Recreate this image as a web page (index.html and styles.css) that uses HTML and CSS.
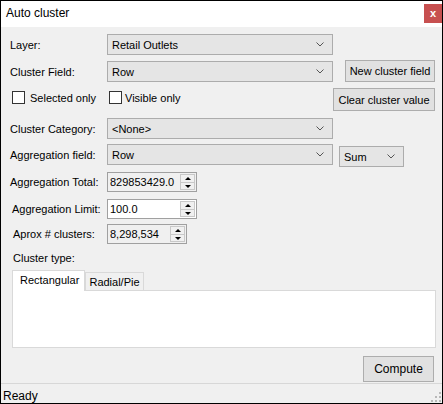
FILE: index.html
```html
<!DOCTYPE html>
<html>
<head>
<meta charset="utf-8">
<link rel="stylesheet" href="styles.css">
</head>
<body>
<div class="window">
  <div class="titlebar">
    <span class="title">Auto cluster</span>
    <div class="close">x</div>
  </div>
  <div class="content">
    <div class="row r1">
      <span class="lbl">Layer:</span>
      <div class="combo wide"><span>Retail Outlets</span><svg class="chev" width="8" height="5" viewBox="0 0 8 5"><polyline points="0.5,0.5 4,4 7.5,0.5" fill="none" stroke="#555" stroke-width="1"/></svg></div>
    </div>
    <div class="row r2">
      <span class="lbl">Cluster Field:</span>
      <div class="combo wide c2"><span>Row</span><svg class="chev" width="8" height="5" viewBox="0 0 8 5"><polyline points="0.5,0.5 4,4 7.5,0.5" fill="none" stroke="#555" stroke-width="1"/></svg></div>
      <div class="btn btn-new">New cluster field</div>
    </div>
    <div class="row r3">
      <div class="check c-sel"><span class="box"></span><span>Selected only</span></div>
      <div class="check c-vis"><span class="box"></span><span>Visible only</span></div>
      <div class="btn btn-clear">Clear cluster value</div>
    </div>
    <div class="row r4">
      <span class="lbl">Cluster Category:</span>
      <div class="combo wide"><span>&lt;None&gt;</span><svg class="chev" width="8" height="5" viewBox="0 0 8 5"><polyline points="0.5,0.5 4,4 7.5,0.5" fill="none" stroke="#555" stroke-width="1"/></svg></div>
    </div>
    <div class="row r5">
      <span class="lbl">Aggregation field:</span>
      <div class="combo wide"><span>Row</span><svg class="chev" width="8" height="5" viewBox="0 0 8 5"><polyline points="0.5,0.5 4,4 7.5,0.5" fill="none" stroke="#555" stroke-width="1"/></svg></div>
      <div class="combo sum"><span>Sum</span><svg class="chev" width="8" height="5" viewBox="0 0 8 5"><polyline points="0.5,0.5 4,4 7.5,0.5" fill="none" stroke="#555" stroke-width="1"/></svg></div>
    </div>
    <div class="row r6">
      <span class="lbl">Aggregation Total:</span>
      <div class="spin ro"><span class="val">829853429.0</span><div class="arrows"><span class="up"></span><span class="dn"></span></div></div>
    </div>
    <div class="row r7">
      <span class="lbl l7">Aggregation Limit:</span>
      <div class="spin"><span class="val">100.0</span><div class="arrows"><span class="up"></span><span class="dn"></span></div></div>
    </div>
    <div class="row r8">
      <span class="lbl l8">Aprox # clusters:</span>
      <div class="spin ro short"><span class="val">8,298,534</span><div class="arrows"><span class="up"></span><span class="dn"></span></div></div>
    </div>
    <div class="type-lbl">Cluster type:</div>
    <div class="tabs">
      <div class="tabstrip">
        <div class="tab active">Rectangular</div>
        <div class="tab">Radial/Pie</div>
      </div>
      <div class="panel"></div>
    </div>
    <div class="actions">
      <div class="btn btn-compute">Compute</div>
    </div>
  </div>
  <div class="status">
    <span>Ready</span>
    <svg class="grip" width="10" height="10" viewBox="0 0 10 10">
      <rect x="8" y="0" width="2" height="2" fill="#b8b8b8"/>
      <rect x="4" y="4" width="2" height="2" fill="#b8b8b8"/>
      <rect x="8" y="4" width="2" height="2" fill="#b8b8b8"/>
      <rect x="0" y="8" width="2" height="2" fill="#b8b8b8"/>
      <rect x="4" y="8" width="2" height="2" fill="#b8b8b8"/>
      <rect x="8" y="8" width="2" height="2" fill="#b8b8b8"/>
    </svg>
  </div>
</div>
</body>
</html>
```
FILE: styles.css
```css
* { box-sizing: border-box; }
html, body { margin: 0; padding: 0; background: #fff; }
body {
  font-family: "Liberation Sans", Arial, sans-serif;
  font-size: 11px;
  color: #000;
}
.window {
  width: 443px;
  height: 404px;
  border: 1px solid #000;
  display: flex;
  flex-direction: column;
  background: #f0f0f0;
}
.titlebar {
  height: 26px;
  background: #fff;
  display: flex;
  align-items: flex-start;
  justify-content: space-between;
}
.title {
  font-size: 12px;
  margin: 5px 0 0 5px;
  line-height: 14px;
}
.close {
  width: 18px;
  height: 19px;
  margin-top: 3px;
  background: #c75050;
  color: #fff;
  font-weight: bold;
  font-size: 11px;
  display: flex;
  align-items: center;
  justify-content: center;
  line-height: 1;
  padding-bottom: 1px;
}
.content {
  height: 356px;
  padding: 7px 7px 0 9px;
  display: flex;
  flex-direction: column;
}
.row {
  display: flex;
  align-items: center;
  position: relative;
}
.lbl {
  width: 97px;
  flex: none;
  white-space: nowrap;
}
.l7 { padding-left: 2px; }
.l8 { padding-left: 3px; }
.combo {
  height: 21px;
  background: #e5e5e5;
  border: 1px solid #acacac;
  display: flex;
  align-items: center;
  justify-content: space-between;
  padding: 0 8px 0 4px;
  flex: none;
}
.combo.wide { width: 226px; }
.combo.sum { width: 65px; margin-left: 6px; margin-top: 2px; }
.chev { display: block; }
.btn {
  background: #e1e1e1;
  border: 1px solid #adadad;
  display: flex;
  align-items: center;
  justify-content: center;
  white-space: nowrap;
  flex: none;
}
.r1 { height: 21px; }
.r2 { height: 22px; margin-top: 5px; align-items: flex-start; }
.r2 .lbl { align-self: center; padding-top: 1px; }
.c2 { margin-top: 1px; }
.btn-new { width: 90px; height: 22px; margin-left: auto; }
.r3 { height: 23px; margin-top: 6px; align-items: flex-start; }
.check {
  display: flex;
  align-items: center;
  margin-top: 2px;
  height: 15px;
}
.c-sel { margin-left: 2px; width: 97px; }
.box {
  width: 13px;
  height: 13px;
  background: #fff;
  border: 1px solid #333;
  margin-right: 5px;
  flex: none;
}
.c-vis .box { margin-right: 3px; }
.btn-clear { width: 102px; height: 23px; margin-left: auto; }
.r4 { height: 21px; margin-top: 7px; }
.r5 { height: 22px; margin-top: 5px; align-items: flex-start; }
.r5 .lbl { align-self: center; }
.r6 { height: 20px; margin-top: 6px; }
.r7 { height: 20px; margin-top: 7px; }
.r8 { height: 20px; margin-top: 5px; }
.spin {
  width: 90px;
  height: 20px;
  background: #fff;
  border: 1px solid #a0a0a0;
  display: flex;
  align-items: center;
  justify-content: space-between;
  padding: 0 1px 0 1px;
  flex: none;
}
.spin.ro { background: #f0f0f0; }
.spin.short { width: 80px; }
.val { padding-left: 1px; }
.arrows {
  width: 15px;
  height: 16px;
  display: flex;
  flex-direction: column;
  border: 1px solid #c8c8c8;
  background: #f0f0f0;
}
.arrows span {
  flex: 1;
  position: relative;
}
.arrows .up { border-bottom: 1px solid #c8c8c8; }
.arrows .up::after, .arrows .dn::after {
  content: "";
  position: absolute;
  left: 4px;
  width: 0;
  height: 0;
  border-left: 3px solid transparent;
  border-right: 3px solid transparent;
}
.arrows .up::after { top: 2px; border-bottom: 3px solid #000; }
.arrows .dn::after { top: 2px; border-top: 3px solid #000; }
.type-lbl {
  margin-top: 7px;
  height: 14px;
  line-height: 14px;
  padding-left: 3px;
}
.tabs {
  margin-top: 5px;
  margin-left: 2px;
  margin-right: -1px;
  display: flex;
  flex-direction: column;
}
.tabstrip {
  display: flex;
  align-items: flex-end;
  height: 20px;
  position: relative;
  z-index: 1;
}
.tab {
  height: 18px;
  padding: 0 4px;
  border: 1px solid #d9d9d9;
  border-bottom: none;
  background: #f0f0f0;
  display: flex;
  align-items: center;
  margin-bottom: 0;
  padding-top: 1px;
}
.tab.active {
  height: 21px;
  margin-bottom: -1px;
  background: #fff;
  padding: 0 7px 2px 7px;
  width: 73px;
}
.tab:not(.active) { width: 59px; justify-content: center; }
.panel {
  height: 58px;
  background: #fff;
  border: 1px solid #d9d9d9;
}
.actions {
  display: flex;
  justify-content: flex-end;
  margin-top: 8px;
  padding-right: 1px;
}
.btn-compute { width: 71px; height: 26px; font-size: 12px; }
.status {
  height: 20px;
  border-top: 1px solid #d7d7d7;
  display: flex;
  align-items: center;
  justify-content: space-between;
  padding-left: 2px;
  font-size: 12px;
  position: relative;
}
.status span { margin-top: 4px; }
.grip { align-self: flex-end; margin: 0 1px 1px 0; }
```
